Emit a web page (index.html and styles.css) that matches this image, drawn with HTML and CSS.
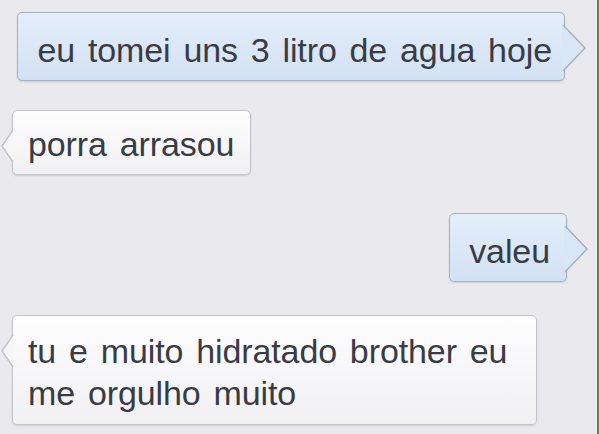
FILE: index.html
```html
<!DOCTYPE html>
<html>
<head>
	<title>chat</title>
	<meta charset="utf-8"/>
	<link rel="stylesheet" href="styles.css">
</head>
<body>
	<div class="chat">
		<div class="bubble out first">
			eu tomei uns 3 litro de agua hoje
			<svg class="tail" width="26" height="50" viewBox="0 0 26 50">
				<polygon points="0,2 23,25 0,48" fill="#d9e6f6"/>
				<polyline points="1,2 23,25 1,48" fill="none" stroke="#a7b1bf" stroke-width="1.5"/>
			</svg>
		</div>
		<div class="bubble in second">
			porra arrasou
			<svg class="tail" width="14" height="36" viewBox="0 0 14 36">
				<polygon points="13,2 2,18 13,34" fill="#f6f6f8"/>
				<polyline points="13,2 2,18 13,34" fill="none" stroke="#c4c4c9" stroke-width="1.5"/>
			</svg>
		</div>
		<div class="bubble out third">
			valeu
			<svg class="tail" width="26" height="50" viewBox="0 0 26 50">
				<polygon points="0,2 23,25 0,48" fill="#d9e6f6"/>
				<polyline points="1,2 23,25 1,48" fill="none" stroke="#a7b1bf" stroke-width="1.5"/>
			</svg>
		</div>
		<div class="bubble in fourth">
			tu e muito hidratado brother eu me orgulho muito
			<svg class="tail" width="14" height="36" viewBox="0 0 14 36">
				<polygon points="13,2 2,18 13,34" fill="#f6f6f8"/>
				<polyline points="13,2 2,18 13,34" fill="none" stroke="#c4c4c9" stroke-width="1.5"/>
			</svg>
		</div>
	</div>
</body>
</html>
```

FILE: styles.css
```css
html, body{
	margin: 0;
	padding: 0;
	background-color: #e9e9ee;
}
.chat{
	width: 599px;
	height: 434px;
	box-sizing: border-box;
	border-right: 2px solid #3f9a45;
	padding-top: 12px;
	display: flex;
	flex-direction: column;
	align-items: flex-start;
	overflow: hidden;
	font-family: "Liberation Sans", Arial, sans-serif;
	font-size: 34px;
	line-height: 42px;
	letter-spacing: -0.1px;
	word-spacing: 3.5px;
	color: #393c44;
}
.bubble{
	position: relative;
	padding: 16px 12px 9px 19px;
	border-radius: 5px;
	box-shadow: 0 1px 2px rgba(0,0,0,0.12);
}
.out{
	align-self: flex-end;
	margin-right: 32px;
	background: linear-gradient(#e4eefa, #d2e1f4);
	border: 1px solid #a7b1bf;
}
.in{
	margin-left: 12px;
	background: linear-gradient(#fdfdfe, #f1f1f4);
	border: 1px solid #c4c4c9;
}
.tail{
	position: absolute;
}
.out .tail{
	right: -24px;
	top: 10px;
}
.in .tail{
	left: -13px;
	top: 17px;
}
.second{
	margin-top: 29px;
	padding: 12px 16px 9px 15px;
}
.third{
	margin-top: 38px;
	padding-left: 19px;
	padding-right: 16px;
	margin-right: 30px;
}
.fourth{
	margin-top: 33px;
	width: 482px;
	padding: 14px 26px 10px 15px;
}
```
